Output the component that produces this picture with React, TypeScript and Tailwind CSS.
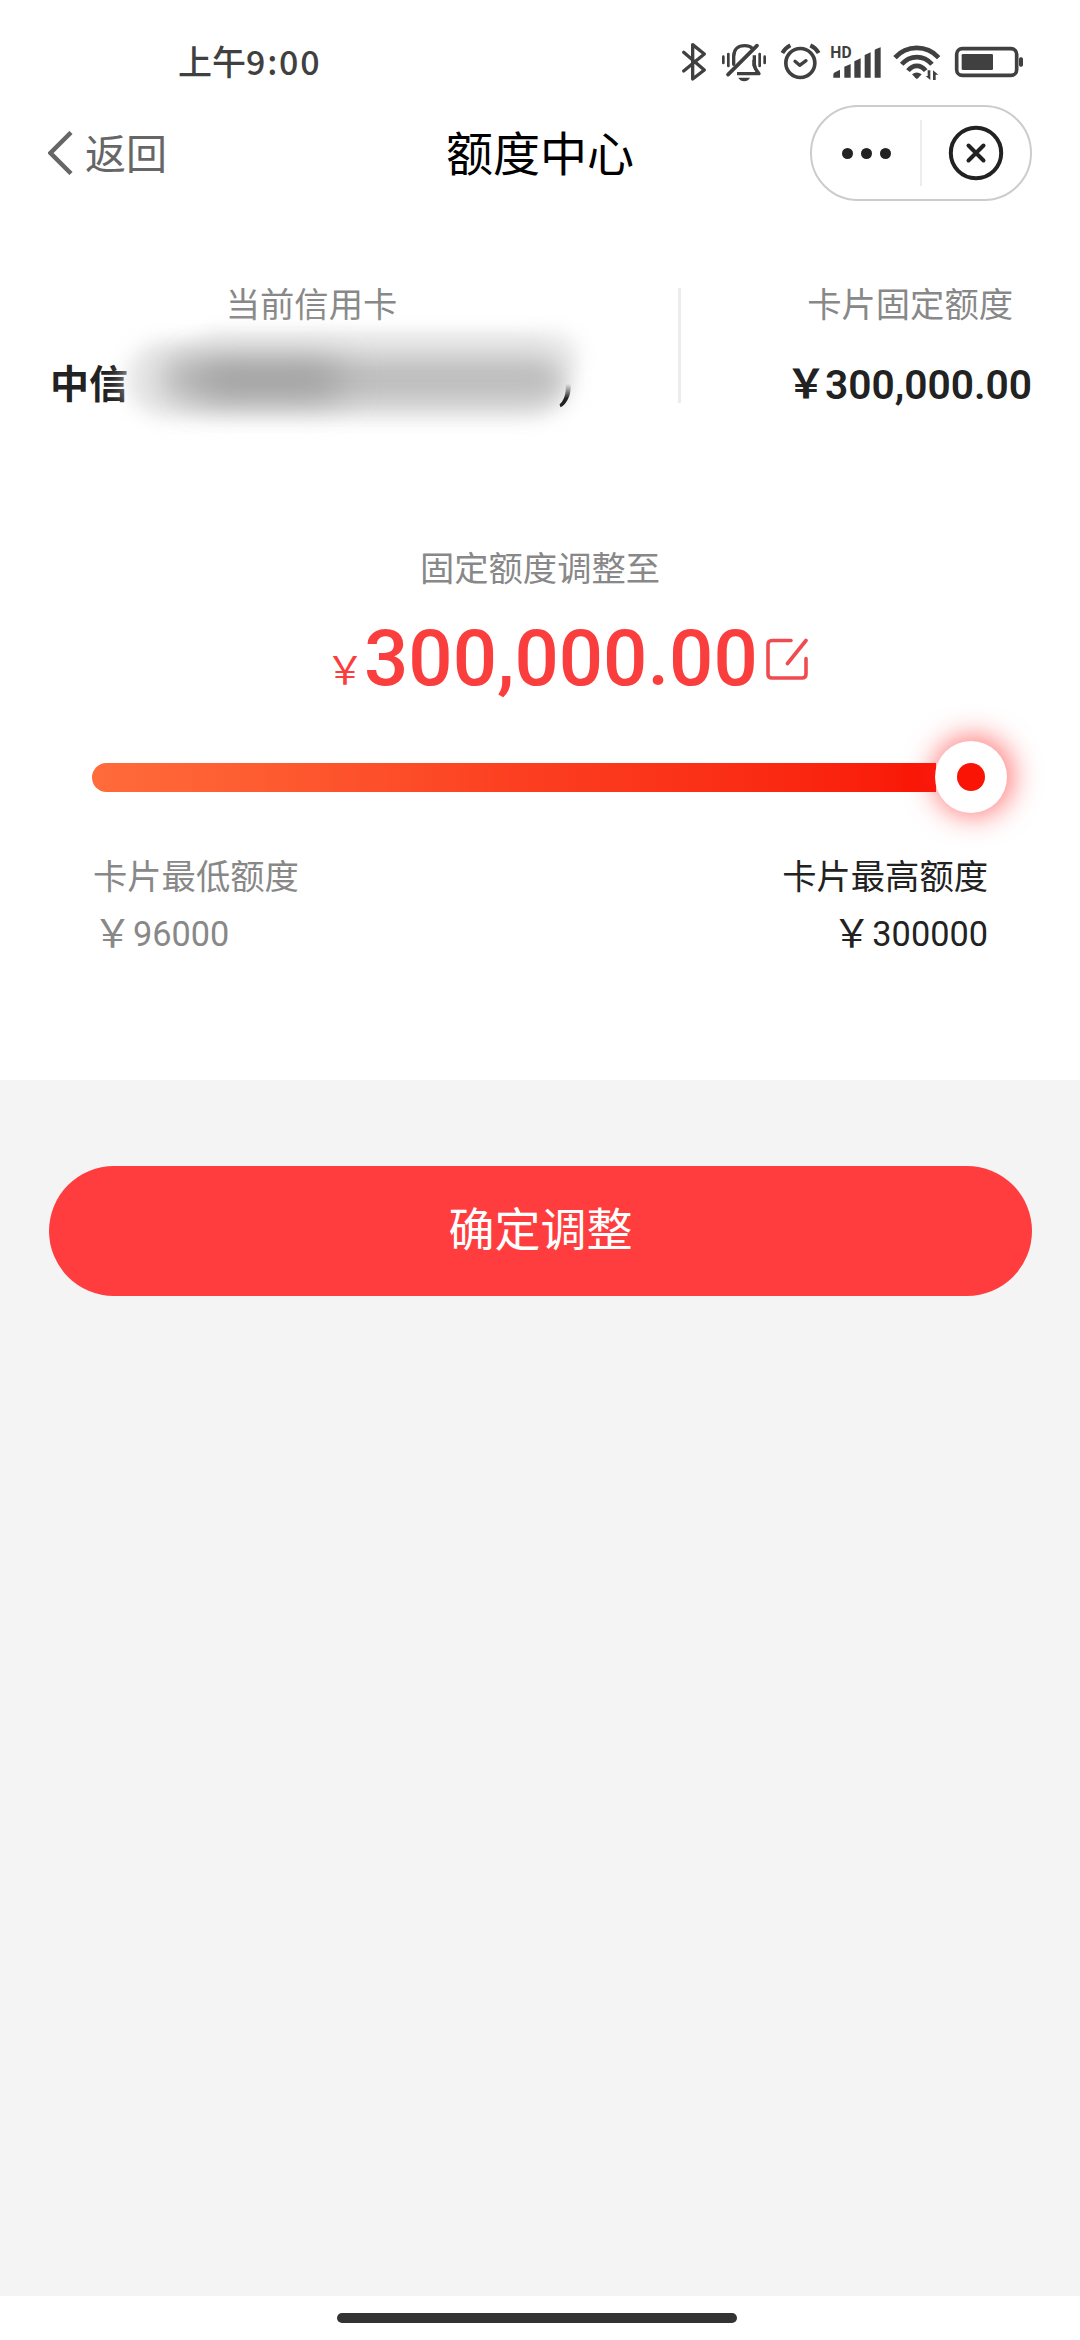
import React from "react";

function StatusIcons() {
  return (
    <div className="flex h-10 items-center text-[#404040]">
      <svg className="mr-[13px] h-10 w-7" viewBox="60 36 84 120" fill="none" stroke="currentColor" strokeWidth="10" strokeLinecap="round" strokeLinejoin="round">
        <path d="M71 67 L133 120 L98 147 V44 L133 72 L71 123" />
      </svg>
      <svg className="mr-[13px] h-10 w-[46px]" viewBox="183 36 138 120" fill="none" stroke="currentColor" strokeWidth="10">
        <path d="M190 80 V99 M205 72 V108 M299 72 V108 M314 80 V99" strokeWidth="8" strokeLinecap="round" />
        <path d="M221 103 V80 C221 58 234 47 254 47 C264 47 271 49 277 55" strokeLinecap="round" />
        <path d="M204 134 L291 47" strokeWidth="11" strokeLinecap="round" />
        <path d="M283 76 V103 C284 116 290 122 297 131 H231" strokeLinejoin="round" />
        <path d="M288 78 V128 L277 107 V91 Z" fill="currentColor" stroke="none" />
        <path d="M235 143 H270 C263 157 242 157 235 143 Z" fill="currentColor" stroke="none" />
      </svg>
      <svg className="mr-[9px] h-10 w-[41px]" viewBox="360 36 123 120" fill="none" stroke="currentColor" strokeWidth="9" strokeLinecap="round" strokeLinejoin="round">
        <circle cx="421" cy="99" r="43.5" strokeWidth="11" />
        <path d="M405 94 L419 106 L438 92" strokeWidth="10" />
        <path d="M367 69 C372 60 380 52 391 46 M451 46 C462 51 470 58 476 69" strokeLinecap="butt" strokeWidth="12" />
      </svg>
      <svg className="mr-[11px] h-10 w-[52px]" viewBox="510 36 156 120" fill="currentColor">
        <text x="511" y="84" fontSize="47" fontWeight="700" fontFamily="Roboto, sans-serif">HD</text>
        <path d="M520 143 V133 Q521 129 525 127 L540 119 V143 Z M553 143 V110 L572 102 V143 Z M583 143 V94 L602 85 V143 Z M614 143 V75 L632 67 V143 Z M644 143 V61 Q645 58 648 57 L662 52 V143 Z" />
      </svg>
      <svg className="mr-3.5 h-10 w-[47px]" viewBox="699 36 141 120" fill="none" stroke="currentColor" strokeWidth="14">
        <path d="M705 83 C740 44 800 44 836 83" />
        <path d="M725 103 C750 74 791 74 816 103" />
        <path d="M744 122 C759 103 782 103 797 122" />
        <path d="M756 133 Q770 122 785 133 L774 145 Q770 148 767 145 Z" fill="currentColor" stroke="none" />
        <path d="M811 121 V150 L797 138 H803 V121 Z M819 150 V121 L835 134 H827 V150 Z" fill="currentColor" stroke="none" />
      </svg>
      <svg className="h-10 w-[70px]" viewBox="882 36 210 120" fill="none" stroke="currentColor">
        <rect x="890" y="56" width="180" height="80" rx="17" strokeWidth="11" />
        <rect x="905" y="72" width="94" height="48" rx="4" fill="currentColor" stroke="none" />
        <rect x="1077" y="82" width="12" height="28" rx="5" fill="currentColor" stroke="none" />
      </svg>
    </div>
  );
}

function StatusBar() {
  return (
    <div className="flex h-[84px] items-end justify-between pb-0.5 pl-[178px] pr-14">
      <div className="flex h-[41px] items-start whitespace-nowrap text-[34px] font-medium leading-10 text-[#404040]">
        <span>上午</span>
        <span className="tracking-[1.8px]">9:00</span>
      </div>
      <StatusIcons />
    </div>
  );
}

function Header() {
  return (
    <header className="grid h-[138px] grid-cols-[1fr_auto_1fr] items-start px-12 pt-[21px]">
      <div className="flex h-24 items-center text-[#666]">
        <svg className="h-11 w-[25px]" viewBox="0 0 25 44" fill="none" stroke="currentColor" strokeWidth="4.5">
          <path d="M23 1.5 L2.5 22 L23 42.5" />
        </svg>
        <span className="mb-1 ml-3 text-[41px] leading-[60px]">返回</span>
      </div>
      <h1 className="text-[47px] leading-[92px] text-black">额度中心</h1>
      <div className="flex h-24 w-[222px] items-center justify-self-end rounded-full border-2 border-[#ccc]">
        <div className="flex flex-1 items-center justify-center gap-2 text-[#222]">
          <i className="size-[11px] rounded-full bg-[#222]" />
          <i className="size-[11px] rounded-full bg-[#222]" />
          <i className="size-[11px] rounded-full bg-[#222]" />
        </div>
        <div className="h-[66px] w-0.5 bg-[#ededed]" />
        <div className="flex flex-1 items-center justify-center">
          <svg className="size-14" viewBox="0 0 56 56" fill="none" stroke="#222" strokeWidth="4">
            <circle cx="28" cy="28" r="25.2" />
            <path d="M20.5 20.5 L35.5 35.5 M35.5 20.5 L20.5 35.5" strokeLinecap="round" />
          </svg>
        </div>
      </div>
    </header>
  );
}

function CardSummary() {
  return (
    <section className="flex h-[220px] items-start pl-[50px] pr-12 pt-[60px]">
      <div className="w-[523px]">
        <div className="text-center text-[34.3px] leading-10 text-[#888]">当前信用卡</div>
        <div className="relative mt-[34px] flex h-14 items-center justify-between text-[39px] font-bold leading-[56px] text-[#222]">
          <span className="mb-1.5">中信</span>
          <span className="z-10 font-['Roboto'] text-[41px] font-semibold [mask-image:linear-gradient(to_bottom,transparent_50%,black_76%)]">)</span>
          <div className="absolute -top-8 left-[76px] h-[94px] w-[450px]">
            <div className="absolute left-0 top-[18px] h-[74px] w-[440px] rounded-[37px] bg-[#e6e6e6] blur-[10px]" />
            <div className="absolute left-[70px] top-2 h-[44px] w-[382px] rounded-[22px] bg-[#ececec] blur-[10px]" />
            <div className="absolute left-[34px] top-[32px] h-[46px] w-[404px] rounded-full bg-[#bcbcbc] blur-[14px]" />
            <div className="absolute left-[70px] top-[42px] h-[28px] w-[145px] rounded-full bg-[#979797] blur-[18px]" />
          </div>
        </div>
      </div>
      <div className="ml-[105px] mt-1.5 h-[115px] w-[3px] bg-[#ececec]" />
      <div className="ml-auto flex flex-col items-end">
        <div className="mr-[19px] text-[34.3px] leading-10 text-[#888]">卡片固定额度</div>
        <div className="mt-[34px] flex h-14 items-center text-[#222]">
          <span className="mb-1.5 w-[38px] text-center text-[40px] font-bold leading-[56px] [text-indent:-1px]">￥</span>
          <span className="mt-px font-['Roboto'] text-[40.7px] font-semibold leading-[56px]">300,000.00</span>
        </div>
      </div>
    </section>
  );
}

function LimitSlider() {
  return (
    <div className="mx-[92px] mt-[37px] flex h-[72px] items-center">
      <div className="h-[29px] w-[844px] shrink-0 rounded-l-full bg-linear-to-r from-[#ff6b3b] via-[#fc3f20] to-[#f91405]" />
      <div className="-ml-px flex size-[72px] shrink-0 items-center justify-center rounded-full bg-white shadow-[2px_-1px_28px_4px_rgba(255,40,40,0.62)]">
        <div className="size-7 rounded-full bg-[#f91405]" />
      </div>
    </div>
  );
}

function Adjust() {
  return (
    <section className="h-[638px] pt-[104px]">
      <div className="text-center text-[34.3px] leading-10 text-[#888]">固定额度调整至</div>
      <div className="ml-[326px] mt-7 flex h-[90px] items-center text-[#fa3e3e]">
        <span className="mt-4 flex w-[38px] justify-center text-[39px] leading-10">￥</span>
        <span className="font-['Roboto'] text-[78px] font-medium leading-[90px]">300,000.00</span>
        <svg className="ml-2 size-[42px]" viewBox="0 0 42 42" fill="none" stroke="#f04c50" strokeWidth="3.6" strokeLinecap="round" strokeLinejoin="round">
          <path d="M25 2.5 H6 Q2 2.5 2 6.5 V36 Q2 40 6 40 H36 Q40 40 40 36 V20.5 M40 2.5 L21.5 25.5" />
        </svg>
      </div>
      <LimitSlider />
      <div className="ml-[93px] mr-[92px] mt-[41px] flex justify-between text-[34.3px] leading-10">
        <div className="text-[#888]">
          <div>卡片最低额度</div>
          <div className="mt-5 flex h-10 items-center">
            <span className="mb-2 w-10 text-[39px]">￥</span>
            <span className="font-['Roboto']">96000</span>
          </div>
        </div>
        <div className="flex flex-col items-end text-[#222]">
          <div>卡片最高额度</div>
          <div className="mt-5 flex h-10 items-center">
            <span className="mb-2 w-10 text-[39px]">￥</span>
            <span className="font-['Roboto']">300000</span>
          </div>
        </div>
      </div>
    </section>
  );
}

export default function App() {
  return (
    <div className="flex h-[2340px] w-[1080px] flex-col overflow-hidden bg-white font-['Noto_Sans_CJK_SC',sans-serif]">
      <StatusBar />
      <Header />
      <CardSummary />
      <Adjust />
      <main className="h-[1216px] bg-[#f4f4f4] pl-[49px] pr-12 pt-[86px]">
        <button className="h-[130px] w-full rounded-full bg-[#ff3d3f] pb-2.5 text-[46px] leading-[120px] text-white">确定调整</button>
      </main>
      <div className="flex h-11 justify-center pt-[17px]">
        <div className="mr-[7px] h-2.5 w-[400px] rounded-full bg-[#333]" />
      </div>
    </div>
  );
}
